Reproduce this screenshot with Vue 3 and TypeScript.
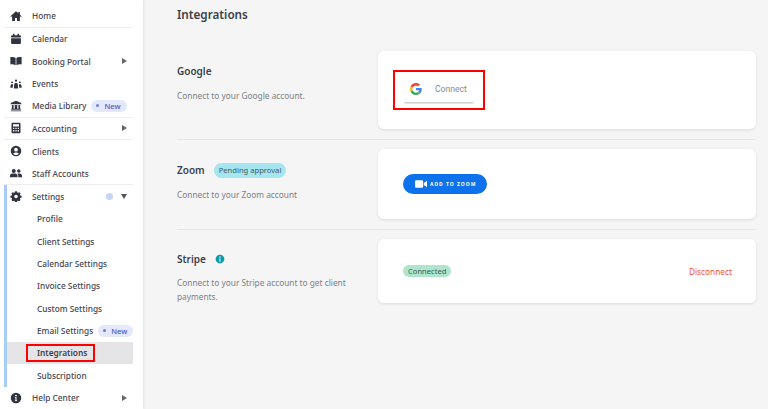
<script setup lang="ts">
interface NavItem {
  label: string
  icon?: string
  arrow?: boolean
  isNew?: boolean
  active?: boolean
  divider?: boolean
}

const topItems: NavItem[] = [
  { label: 'Home', icon: 'home', divider: true },
  { label: 'Calendar', icon: 'calendar' },
  { label: 'Booking Portal', icon: 'book', arrow: true },
  { label: 'Events', icon: 'events' },
  { label: 'Media Library', icon: 'bank', isNew: true, divider: true },
  { label: 'Accounting', icon: 'calc', arrow: true, divider: true },
  { label: 'Clients', icon: 'client' },
  { label: 'Staff Accounts', icon: 'staff', divider: true },
]

const settingsItems: NavItem[] = [
  { label: 'Profile' },
  { label: 'Client Settings' },
  { label: 'Calendar Settings' },
  { label: 'Invoice Settings' },
  { label: 'Custom Settings' },
  { label: 'Email Settings', isNew: true },
  { label: 'Integrations', active: true },
  { label: 'Subscription' },
]

const iconPaths: Record<string, string> = {
  home: 'M8 1.500 .5 8.200l.9 1L2.800 8v6.500h3.900v-4h2.600v4h3.900V8l1.400 1.200.9-1-2.300-2V2.500h-2v1.900z',
  calendar: 'M4 1h2v2h4V1h2v2h1.200c.7 0 1.300.6 1.300 1.300V6h-13V4.300C1.500 3.600 2.100 3 2.800 3H4V1zM1.500 7h13v6.200c0 .9-.7 1.600-1.600 1.600H3.100c-.9 0-1.600-.7-1.600-1.600V7z',
  book: 'M.5 2.800C2.800 2.400 5.600 2.600 7.500 4v9.600c-2-1.200-4.700-1.400-7-1V2.800zM15.500 2.800C13.200 2.400 10.400 2.600 8.500 4v9.600c2-1.200 4.700-1.400 7-1V2.800z',
  events: 'M8 2a1.500 1.500 0 1 1 0 3 1.500 1.500 0 0 1 0-3zM2.800 4.500a1.300 1.300 0 1 1 0 2.600 1.300 1.300 0 0 1 0-2.600zM13.200 4.500a1.300 1.300 0 1 1 0 2.600 1.300 1.300 0 0 1 0-2.600zM6.300 6.500h3.400l1 3.500v4H5.300v-4l1-3.500zM1.500 8.200h2.700L3.600 13H.5v-2.500l1-2.300zM11.800 8.200h2.700l1 2.300V13h-3.100l-.6-4.800z',
  bank: 'M8 1l7 3v1.700H1V4l7-3zM2.500 6.700h2.300v5H6.300v-5h3.400v5h1.500v-5h2.300v5h.8v1.400H1.700v-1.400h.8v-5zM1 13.900h14V15H1z',
  calc: 'M3.300 1h9.400c.7 0 1.300.6 1.300 1.300v11.400c0 .7-.6 1.300-1.300 1.300H3.300C2.600 15 2 14.400 2 13.700V2.300C2 1.600 2.600 1 3.300 1zM4 3v3h8V3H4zM4 7.500v1.700h1.700V7.500H4zm3.200 0v1.700h1.700V7.500H7.200zm3.100 0v1.700H12V7.500h-1.700zM4 10.700v1.800h1.700v-1.800H4zm3.200 0v1.800h1.700v-1.800H7.200zm3.100 0v1.800H12v-1.800h-1.700z',
  client: 'M8 1a7 7 0 1 1 0 14A7 7 0 0 1 8 1zm0 2.700a2.500 2.500 0 1 0 0 5 2.500 2.500 0 0 0 0-5zm0 6.200c-1.800 0-3.200.8-3.800 1.900C5.200 12.900 6.500 13.500 8 13.500s2.800-.6 3.800-1.700c-.6-1.100-2-1.900-3.800-1.900z',
  staff: 'M5 2.500a2.700 2.700 0 1 1 0 5.400 2.700 2.700 0 0 1 0-5.400zM11.700 3a2.300 2.300 0 1 1 0 4.600 2.300 2.300 0 0 1 0-4.600zM3 8.800h4c1.700 0 3 1.300 3 3v1.700H0v-1.700c0-1.700 1.300-3 3-3zM11 13.500v-1.900c0-1.100-.4-2-1.100-2.700.5-.1 1-.2 1.600-.2h1.200c1.800 0 3.300 1.300 3.300 3v1.800h-5z',
  settings: 'M6.800 1.500h2.400l.4 1.700 1.200.6 1.600-.9 1.700 1.700-.9 1.500.5 1.300 1.700.4v2.400l-1.700.5-.5 1.200.9 1.500-1.700 1.700-1.600-.9-1.200.6-.4 1.700H6.800l-.4-1.700-1.200-.6-1.600.9-1.700-1.700.9-1.500-.5-1.200-1.700-.5V7.800l1.700-.4.500-1.300-.9-1.500 1.700-1.700 1.600.9 1.200-.6.400-1.700zM8 6.300a2.400 2.400 0 1 0 0 4.800 2.400 2.400 0 0 0 0-4.800z',
  info: 'M8 1a7 7 0 1 1 0 14A7 7 0 0 1 8 1zm0 2.600a1.200 1.200 0 1 0 0 2.400 1.200 1.200 0 0 0 0-2.400zM6.600 7v1.200h.7v2.700h-.7v1.200h2.800v-1.200h-.7V7H6.600z',
}

const helpItem: NavItem = { label: 'Help Center', icon: 'info', arrow: true }
</script>

<template>
  <div class="page">
    <aside class="sidebar">
      <div v-for="item in topItems" :key="item.label" class="nav-item" :class="{ divided: item.divider }">
        <svg class="nav-icon" viewBox="0 0 16 16"><path fill-rule="evenodd" :d="iconPaths[item.icon!]" /></svg>
        <span class="nav-label">{{ item.label }}</span>
        <span v-if="item.isNew" class="new-pill"><i class="dot"></i>New</span>
        <span v-if="item.arrow" class="arrow-right"></span>
      </div>

      <div class="settings-group">
        <div class="nav-item">
          <svg class="nav-icon" viewBox="0 0 16 16"><path fill-rule="evenodd" :d="iconPaths.settings" /></svg>
          <span class="nav-label">Settings</span>
          <i class="status-dot"></i>
          <span class="arrow-down"></span>
        </div>
        <div
          v-for="item in settingsItems"
          :key="item.label"
          class="sub-item"
          :class="{ active: item.active }"
        >
          <span class="sub-label">{{ item.label }}</span>
          <span v-if="item.isNew" class="new-pill"><i class="dot"></i>New</span>
        </div>
      </div>

      <div class="nav-item">
        <svg class="nav-icon" viewBox="0 0 16 16"><path fill-rule="evenodd" :d="iconPaths[helpItem.icon!]" /></svg>
        <span class="nav-label">{{ helpItem.label }}</span>
        <span class="arrow-right"></span>
      </div>
    </aside>

    <main class="content">
      <h1 class="title">Integrations</h1>

      <section class="row row-google">
        <div class="info">
          <h2 class="name">Google</h2>
          <p class="desc">Connect to your Google account.</p>
        </div>
        <div class="card">
          <div class="highlight">
            <button class="google-btn">
              <svg class="g-logo" viewBox="0 0 48 48">
                <path fill="#EA4335" d="M24 9.500c3.500 0 6.700 1.300 9.100 3.500l6.800-6.800C35.800 2.400 30.300 0 24 0 14.600 0 6.500 5.400 2.600 13.200l7.900 6.200C12.400 13.700 17.700 9.500 24 9.500z" />
                <path fill="#4285F4" d="M46.900 24.500c0-1.600-.1-3.100-.4-4.500H24v9h12.900c-.6 3-2.200 5.500-4.700 7.200l7.700 6c4.500-4.200 7-10.300 7-17.700z" />
                <path fill="#FBBC05" d="M10.500 28.600c-.5-1.400-.8-3-.8-4.600s.3-3.200.8-4.600l-7.900-6.200C.9 16.500 0 20.100 0 24s.9 7.500 2.600 10.800l7.900-6.200z" />
                <path fill="#34A853" d="M24 48c6.500 0 11.900-2.100 15.900-5.800l-7.700-6c-2.200 1.400-4.900 2.300-8.200 2.300-6.300 0-11.600-4.200-13.500-9.900l-7.900 6.200C6.500 42.600 14.600 48 24 48z" />
              </svg>
              <span>Connect</span>
            </button>
          </div>
        </div>
      </section>

      <section class="row row-zoom">
        <div class="info">
          <h2 class="name">Zoom <span class="pill pending">Pending approval</span></h2>
          <p class="desc">Connect to your Zoom account</p>
        </div>
        <div class="card">
          <button class="zoom-btn">
            <svg class="zoom-cam" viewBox="0 0 14 9">
              <rect x="0" y="0" width="9.500" height="9" rx="1.500" />
              <path d="M10.300 3.200 14 .6v7.800L10.300 5.800z" />
            </svg>
            <span>ADD TO ZOOM</span>
          </button>
        </div>
      </section>

      <section class="row row-stripe">
        <div class="info">
          <h2 class="name">
            Stripe
            <svg class="stripe-info" viewBox="0 0 16 16"><path fill-rule="evenodd" :d="iconPaths.info" /></svg>
          </h2>
          <p class="desc">Connect to your Stripe account to get client payments.</p>
        </div>
        <div class="card card-between">
          <span class="pill connected">Connected</span>
          <a class="disconnect">Disconnect</a>
        </div>
      </section>
    </main>
  </div>
</template>

<style>
html,
body {
  margin: 0;
  background: #f5f5f5;
}
</style>

<style scoped>
.page {
  display: flex;
  width: 768px;
  height: 409px;
  overflow: hidden;
  font-family: "Noto Sans", "Open Sans", "Liberation Sans", sans-serif;
  background: #f5f5f5;
}

.sidebar {
  flex: none;
  width: 143px;
  box-sizing: border-box;
  padding: 5px 10px 0 4px;
  background: #fff;
  box-shadow: 1px 0 3px rgba(0, 0, 0, 0.08);
}

.nav-item {
  display: flex;
  align-items: center;
  height: 22.5px;
  box-sizing: border-box;
  position: relative;
  font-size: 8.3px;
  font-weight: 500;
  color: #45454f;
}

.nav-item.divided {
  border-bottom: 1px solid #eceef0;
}

.nav-icon {
  flex: none;
  width: 12px;
  height: 12px;
  margin: 0 10px 0 6px;
  fill: #2f3440;
}

.nav-label {
  white-space: nowrap;
}

.new-pill {
  display: inline-flex;
  align-items: center;
  height: 12px;
  padding: 0 6px 0 5px;
  margin-left: 5px;
  border-radius: 6px;
  background: #e3e8fd;
  color: #4a55c8;
  font-size: 7.5px;
  font-weight: 500;
}

.dot {
  width: 3px;
  height: 3px;
  margin-right: 5px;
  border-radius: 50%;
  background: #6d78ee;
}

.arrow-right {
  margin-left: auto;
  margin-right: 6px;
  border-left: 5px solid #666;
  border-top: 3px solid transparent;
  border-bottom: 3px solid transparent;
}

.settings-group {
  border-left: 3px solid #a5cdf8;
}

.settings-group .nav-item {
  margin-left: -3px;
}

.status-dot {
  width: 7px;
  height: 7px;
  margin-left: auto;
  border-radius: 50%;
  background: #c5d4f8;
}

.arrow-down {
  margin: 0 6px 0 8px;
  border-top: 5px solid #555;
  border-left: 3px solid transparent;
  border-right: 3px solid transparent;
}

.sub-item {
  display: flex;
  align-items: center;
  height: 22.4px;
  padding-left: 30px;
  font-size: 8.3px;
  font-weight: 500;
  color: #45454f;
  white-space: nowrap;
}

.sub-item.active {
  background: #e5e5e8;
}

.sub-item.active .sub-label {
  margin: 0 -8px 0 -11px;
  padding: 1px 6px 1px 9px;
  border: 2px solid #f00;
  line-height: 12px;
  font-weight: 600;
  color: #3f3f4a;
}

.content {
  flex: 1;
  min-width: 0;
  padding: 0 12px 0 34px;
}

.title {
  margin: 6px 0 20px;
  font-size: 11.7px;
  line-height: 16px;
  font-weight: 600;
  color: #3b3f48;
}

.row {
  display: flex;
  padding: 9px 0 10px;
  border-bottom: 1px solid #e6e6e6;
}

.row-stripe {
  border-bottom: 0;
}

.info {
  flex: none;
  width: 201px;
}

.name {
  display: flex;
  align-items: center;
  gap: 9px;
  height: 14px;
  margin: 0;
  font-size: 10px;
  line-height: 14px;
  font-weight: 600;
  color: #3b3f48;
}

.desc {
  margin: 11px 28px 0 0;
  font-size: 8.3px;
  line-height: 14px;
  color: #7d8087;
}

.row-google .info {
  padding-top: 13px;
}

.row-zoom .info {
  padding-top: 14px;
}

.row-stripe .info {
  padding-top: 13px;
}

.row-stripe .desc {
  margin-top: 10px;
}

.card {
  flex: 1;
  display: flex;
  align-items: center;
  box-sizing: border-box;
  padding: 0 24px 0 25px;
  border-radius: 6px;
  background: #fff;
  box-shadow: 0 1px 3px rgba(0, 0, 0, 0.1);
}

.row-google .card {
  height: 78px;
  padding-left: 15px;
}

.row-zoom .card {
  height: 70px;
}

.row-stripe .card {
  height: 64px;
}

.card-between {
  justify-content: space-between;
}

.highlight {
  padding: 4px 9px 5px;
  border: 2px solid #f00;
  display: flex;
}

.google-btn {
  display: flex;
  align-items: center;
  width: 70px;
  height: 27px;
  padding: 0 0 0 6px;
  border: 0;
  border-bottom: 1px solid #d2d2d2;
  border-radius: 2px;
  background: #fff;
  box-shadow: 0 1px 1px rgba(0, 0, 0, 0.12);
  font: 400 8.6px "Roboto", "Liberation Sans", sans-serif;
  color: #8a8a8a;
}

.g-logo {
  width: 12px;
  height: 12px;
  margin-right: 13px;
}

.zoom-btn {
  display: flex;
  align-items: center;
  width: 84px;
  height: 20px;
  padding: 0 0 0 12px;
  border: 0;
  border-radius: 10px;
  background: #0e72ed;
  color: #fff;
  font: 700 5px "Open Sans", "Liberation Sans", sans-serif;
  letter-spacing: 0.95px;
}

.zoom-cam {
  width: 12px;
  height: 8px;
  margin-right: 3px;
  fill: #fff;
}

.pill {
  display: inline-flex;
  align-items: center;
  font-size: 7.6px;
  font-weight: 400;
  color: #3d5a5c;
}

.pending {
  height: 15px;
  padding: 0 5px;
  border-radius: 8px;
  background: #a5e6f1;
}

.connected {
  height: 12px;
  padding: 0 5px;
  border-radius: 6px;
  background: #ade6cd;
}

.stripe-info {
  width: 10px;
  height: 10px;
  fill: #0a9aa8;
  margin-left: 0;
}

.disconnect {
  font-size: 8.3px;
  color: #ee5533;
}
</style>
